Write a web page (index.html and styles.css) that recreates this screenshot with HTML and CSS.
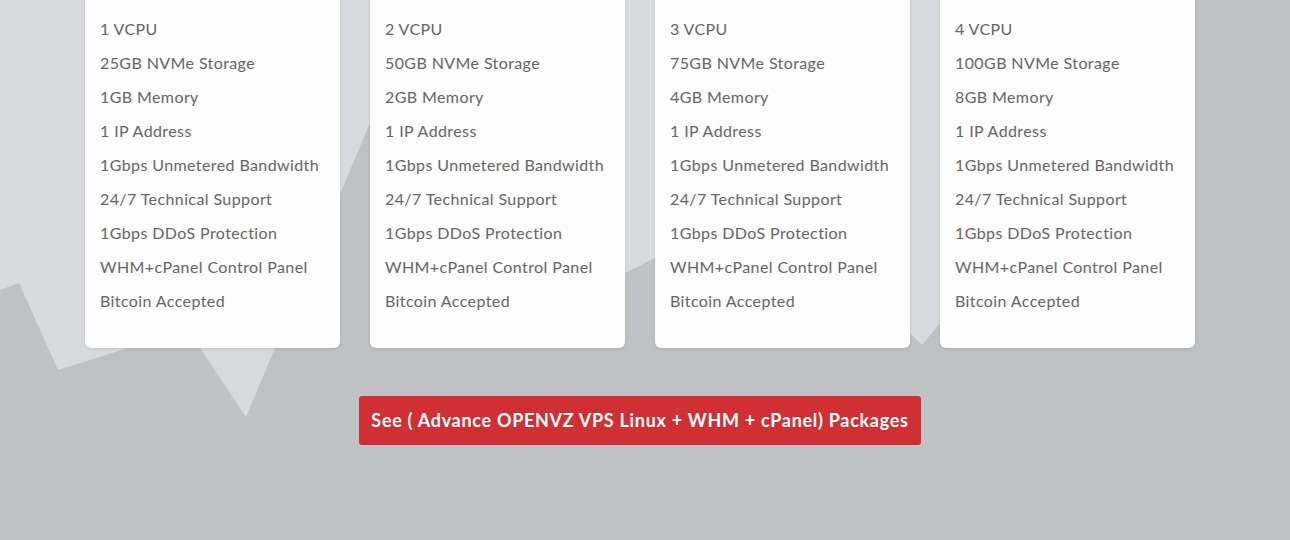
FILE: index.html
```html
<!DOCTYPE html>
<html lang="en">
<head>
<meta charset="utf-8">
<title>OpenVZ VPS Plans</title>
<link rel="stylesheet" href="styles.css">
</head>
<body>
<section class="pricing">
  <svg class="pricing-bg" width="1290" height="540" viewBox="0 0 1290 540" aria-hidden="true">
    <polygon fill="#d7dbdf" points="0,0 1100,0 940,323 922,345 910,333 655,258 625,273 370,123 275,348 246,417 200,348 168,300 128,348 58,370 19,283 0,290"/>
  </svg>
  <div class="pricing-inner">
    <div class="plans">
      <div class="plan">
        <ul class="features">
          <li>1 VCPU</li>
          <li>25GB NVMe Storage</li>
          <li>1GB Memory</li>
          <li>1 IP Address</li>
          <li>1Gbps Unmetered Bandwidth</li>
          <li>24/7 Technical Support</li>
          <li>1Gbps DDoS Protection</li>
          <li>WHM+cPanel Control Panel</li>
          <li>Bitcoin Accepted</li>
        </ul>
      </div>
      <div class="plan">
        <ul class="features">
          <li>2 VCPU</li>
          <li>50GB NVMe Storage</li>
          <li>2GB Memory</li>
          <li>1 IP Address</li>
          <li>1Gbps Unmetered Bandwidth</li>
          <li>24/7 Technical Support</li>
          <li>1Gbps DDoS Protection</li>
          <li>WHM+cPanel Control Panel</li>
          <li>Bitcoin Accepted</li>
        </ul>
      </div>
      <div class="plan">
        <ul class="features">
          <li>3 VCPU</li>
          <li>75GB NVMe Storage</li>
          <li>4GB Memory</li>
          <li>1 IP Address</li>
          <li>1Gbps Unmetered Bandwidth</li>
          <li>24/7 Technical Support</li>
          <li>1Gbps DDoS Protection</li>
          <li>WHM+cPanel Control Panel</li>
          <li>Bitcoin Accepted</li>
        </ul>
      </div>
      <div class="plan">
        <ul class="features">
          <li>4 VCPU</li>
          <li>100GB NVMe Storage</li>
          <li>8GB Memory</li>
          <li>1 IP Address</li>
          <li>1Gbps Unmetered Bandwidth</li>
          <li>24/7 Technical Support</li>
          <li>1Gbps DDoS Protection</li>
          <li>WHM+cPanel Control Panel</li>
          <li>Bitcoin Accepted</li>
        </ul>
      </div>
    </div>
    <div class="more">
      <a class="btn-more" href="#">See ( Advance OPENVZ VPS Linux + WHM + cPanel) Packages</a>
    </div>
  </div>
</section>
</body>
</html>
```

FILE: styles.css
```css
html, body {
  margin: 0;
  padding: 0;
}

body {
  background: #bec2c5;
  font-family: "Lato", "Open Sans", sans-serif;
  overflow: hidden;
}

.pricing {
  position: relative;
  width: 1290px;
  height: 540px;
  overflow: hidden;
}

/* decorative light shape behind the cards */
.pricing-bg {
  position: absolute;
  left: 0;
  top: 0;
}

.pricing-inner {
  position: relative;
  padding-right: 10px;
  display: flex;
  flex-direction: column;
  align-items: center;
}

.plans {
  display: flex;
  gap: 30px;
  margin-top: -30px;
}

.plan {
  width: 255px;
  box-sizing: border-box;
  background: #fcfcfc;
  border-radius: 6px;
  box-shadow: 0 1px 3px rgba(0, 0, 0, 0.12);
  padding: 42px 15px 30px;
}

.features {
  list-style: none;
  margin: 0;
  padding: 0;
}

.features li {
  font-size: 16px;
  line-height: 34px;
  letter-spacing: 0.4px;
  color: #666666;
  white-space: nowrap;
}

.more {
  margin-top: 48px;
}

.btn-more {
  display: inline-block;
  background: #d03033;
  color: #ffffff;
  font-weight: 700;
  font-size: 18px;
  line-height: 49px;
  letter-spacing: 0.7px;
  padding: 0 12px;
  border-radius: 3px;
  text-decoration: none;
}
```
